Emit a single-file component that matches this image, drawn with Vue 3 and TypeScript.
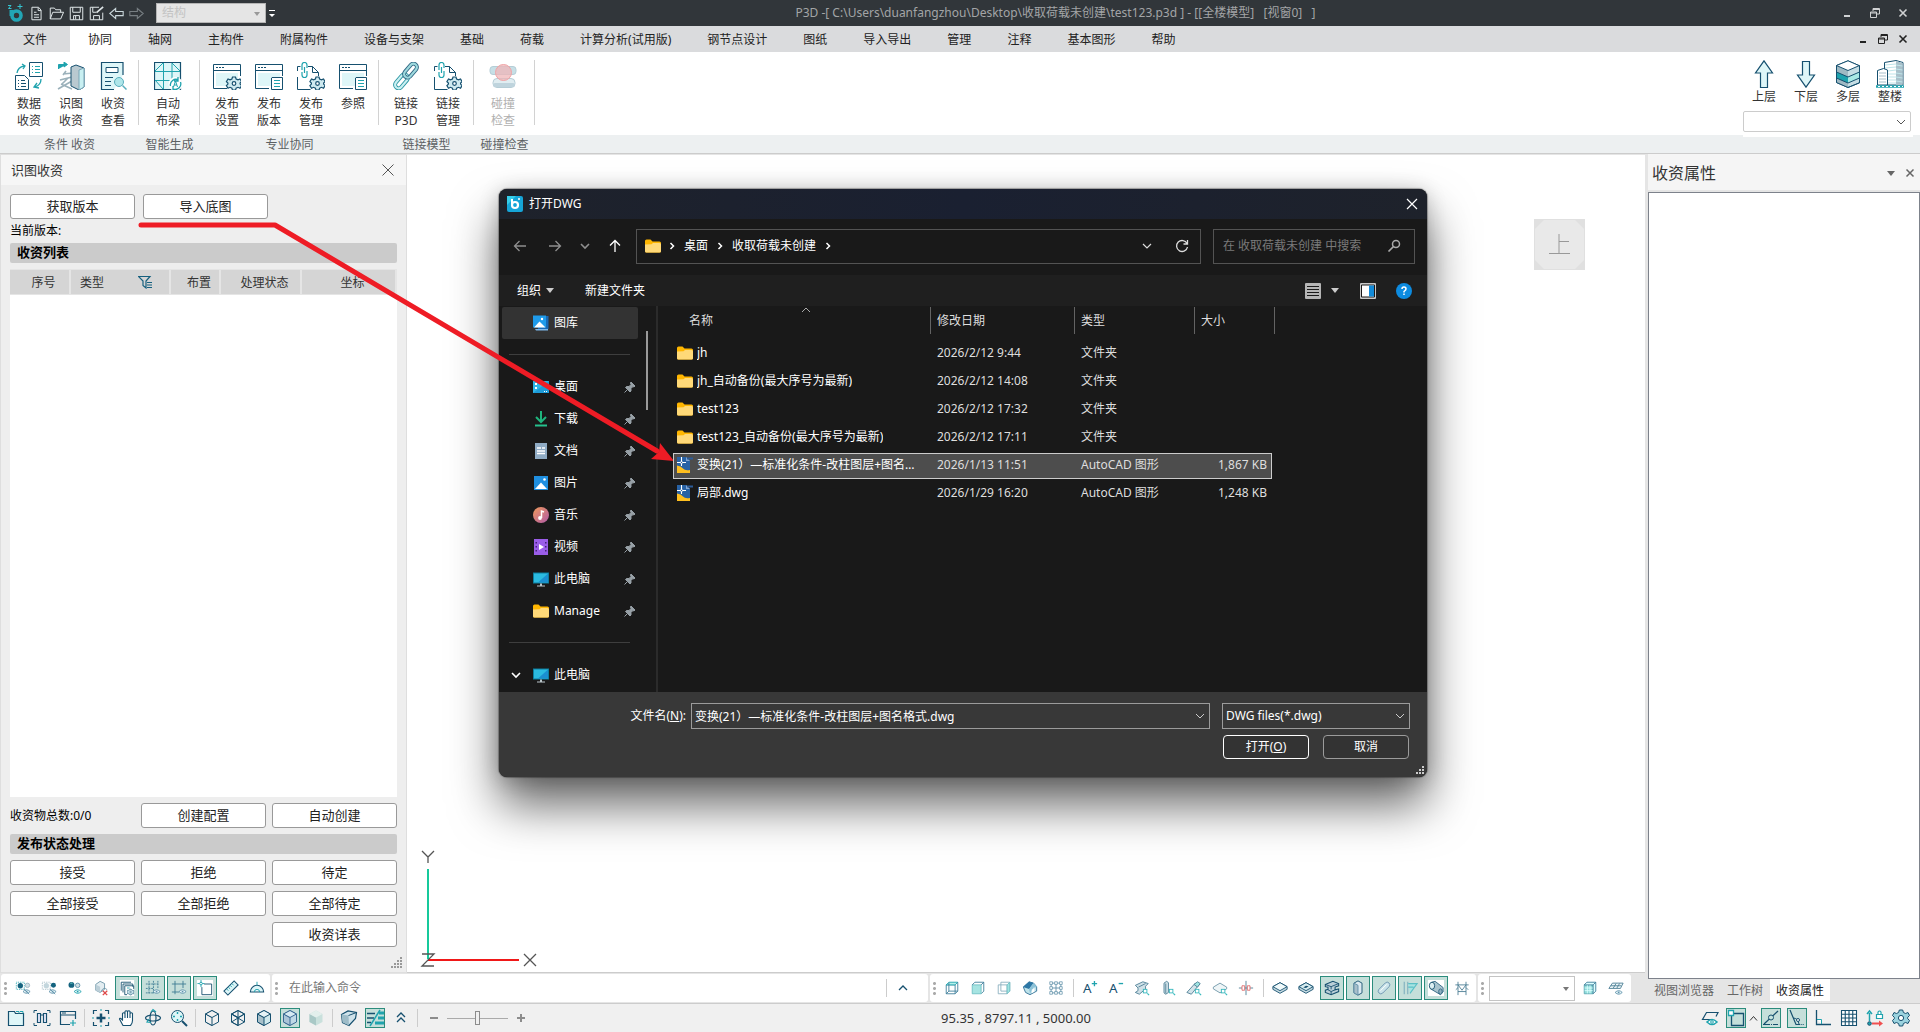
<script setup lang="ts">
import { ref } from 'vue'

type IconMap = Record<string, string>

const N = '#16506f'
const T = '#1fa3ae'
const L = '#def6f8'

const gear = (x: number, y: number, s = 1) =>
  `<g transform="translate(${x} ${y}) scale(${s})"><path d="M-1.5-6.5h3l.6 2 1.9.9 2-.9 1.6 2.6-1.5 1.5v1l1.5 1.5-1.6 2.6-2-.9-1.9.9-.6 2h-3l-.6-2-1.9-.9-2 .9-1.6-2.6 1.5-1.5v-1l-1.5-1.5 1.6-2.6 2 .9 1.9-.9z" fill="#cfeaf0" stroke="${N}" stroke-width="1.2"/><circle r="1.8" fill="#fff" stroke="${N}" stroke-width="1.2"/></g>`
const windowBox = `<path d="M.5 2.5h27v24H.5z" fill="#fff"/><path d="M3 11h22v13H3z" fill="${L}"/><path d="M14 26.500H.5v-24h27V14M.5 8.500h27" fill="none" stroke="${N}"/><path d="M3 5.500h2m1 0h2m1 0h2" stroke="${N}"/>`
const smallDoc = `<path d="M17 15.500h10.500v12h-11V16z" fill="#fff" stroke="${N}"/><path d="M19 18.500h6m-6 3h6m-6 3h6" stroke="${T}"/>`
const linkDoc = `<path d="M.5 15v12.500h13M.5 9V4.500h3M11 4.500h4.500l6 6V14M15.500 4.500v6h6" fill="none" stroke="${N}"/><path d="M5 8V3q0-2.500 2.500-2.500T10 3v3M5 10v3q0 2.500 2.500 2.500T10 13V9M7.500 5v6" fill="none" stroke="${T}" stroke-width="1.2"/>`
const cube = (top: string, left: string, right: string, c = N) =>
  `<path d="M9 1.500l6.500 3.500v8L9 16.500 2.500 13V5z" fill="${right}" stroke="${c}"/><path d="M2.500 5L9 8.500v8L2.500 13z" fill="${left}" stroke="${c}"/><path d="M9 1.500L15.500 5 9 8.500 2.500 5z" fill="${top}" stroke="${c}"/>`
const eye = (x: number, y: number, c = '#5f93ac') =>
  `<path d="M${x - 4} ${y}q4-4 8 0q-4 4-8 0z" fill="#e8f5f8" stroke="${c}"/><circle cx="${x}" cy="${y}" r="1" fill="${c}"/>`
const lens = `<rect x="10.500" y="10.500" width="4" height="4" fill="#fff" stroke="#35b8bd"/><path d="M15 15l2 2" stroke="#35b8bd" stroke-width="1.300"/>`
const folder = `<path d="M0 3q0-1.500 1.500-1.500h4L7.500 3.500h7q1.500 0 1.500 1.500v8q0 1.500-1.500 1.500h-13Q0 14.500 0 13z" fill="#ffb600"/><path d="M0 6.500l6.500-.3L8 5h6.500Q16 5 16 6.500V13q0 1.500-1.500 1.500h-13Q0 14.500 0 13z" fill="#ffd978"/>`
const computer = `<path d="M0 1.500h16v11H0z" fill="#0c7f9f"/><path d="M1 2.500h14v9H1z" fill="#2bbbe0"/><path d="M15 2.500v9H5z" fill="#1b8fd0"/><path d="M7 12.500h2v2H7zM4 14.500h8v1H4z" fill="#b9c4c9"/>`

const big: IconMap = {
  data: `<path d="M14.500.5h13v14h-13z" fill="#fff" stroke="${N}"/><path d="M.5 13.500h9l4 4v10H.5z" fill="#fff" stroke="${N}"/><path d="M17 4.500h1m2 0h5m-8 3h1m2 0h5m-8 3h1m2 0h5" stroke="${T}"/><path d="M3 18.500h1m2 0h4m-7 3h1m2 0h5m-8 3h1m2 0h5" stroke="${N}"/><path d="M2 11q1-6 7-7M7 2l3 2-2 3M26 17q0 6-6 8m2-4l-3 4 5 1" fill="none" stroke="${T}" stroke-width="1.300"/>`,
  identify: `<path d="M1.500 7V2.500h8M7 0l3.500 2.500L7 5z" fill="${T}" stroke="${T}"/><path d="M6 12l10-1M3 18l12-3M9 9l-3 4m5 3l-6 6M15 19L1 27m3-5l11 5" stroke="#9bb1ba" stroke-width="1.600"/><path d="M14 5l5-2 8 3v19l-5 3-8-4z" fill="#b9c9d0" stroke="${N}"/><path d="M22 8l5-2v19l-5 3z" fill="#c9f0f2" stroke="#7ba7b8"/>`,
  inspect: `<path d="M24 13V.5H2.500v27H15" fill="${L}" stroke="${N}" stroke-width="1.200"/><path d="M7 5.500h12v5H7z" fill="#fff" stroke="${N}"/><path d="M6 15.500h8m-8 4h6m-6 4h6" stroke="${N}"/><circle cx="20" cy="20" r="4.500" fill="#aee6ea" stroke="#59aebd"/><path d="M23.500 23.500l4 4" stroke="#59aebd" stroke-width="1.500"/>`,
  beam: `<path d="M.5.5h26v27H.5z" fill="${L}" stroke="${N}" stroke-width="1.200"/><path d="M1 9.500h25M1 18.500h25M9.500 1v26M18 1v26M1 9l8-8M18 1l8 8M1 18l8 9" stroke="${T}" fill="none"/><circle cx="21.500" cy="22" r="7" fill="#fff"/><path d="M16.500 24a5.500 5.500 0 0 1 8-6m2 2a5.500 5.500 0 0 1-7 7M24 15v4h-4m-1 5v4h4" fill="none" stroke="${T}" stroke-width="1.300"/><path d="M19.500 25l2-6 2 6m-3.300-2h2.600" fill="none" stroke="${T}"/>`,
  setup: windowBox + gear(21, 21.500),
  version: windowBox + smallDoc,
  manage: linkDoc + gear(20.500, 21.500),
  link: `<g fill="none" transform="rotate(-50 14 14)"><rect x="-1" y="10.500" width="16" height="7" rx="3.500" stroke="#2a95a2" stroke-width="4"/><rect x="-1" y="10.500" width="16" height="7" rx="3.500" stroke="#c9f0f2" stroke-width="2.200"/><rect x="13" y="10.500" width="16" height="7" rx="3.500" stroke="#2f6683" stroke-width="4"/><rect x="13" y="10.500" width="16" height="7" rx="3.500" stroke="#9ed9dd" stroke-width="2.200"/></g>`,
  collide: `<rect x="1" y="4.500" width="26" height="8" rx="3" fill="#c6dfe6" stroke="#b5cdd6"/><rect x="4" y="16.500" width="22" height="9" rx="4" fill="#e0edf1" stroke="#b5cdd6"/><rect x="4" y="21" width="22" height="4" rx="2" fill="#bfd4dd"/><circle cx="14.500" cy="10.500" r="8" fill="#efb6b8" fill-opacity=".75" stroke="#f0a3a5"/>`,
  up: `<path d="M14 .8L22.500 13h-5v14.500h-7V13h-5z" fill="${L}" stroke="${N}" stroke-width="1.200"/>`,
  down: `<path d="M14 27.200L22.500 15h-5V1.500h-7V15h-5z" fill="${L}" stroke="${N}" stroke-width="1.200"/>`,
  layers: `<path d="M14 .8l11.500 5v17L14 27.500 2.500 22.500v-17z" fill="#c5dde4" stroke="${N}"/><path d="M2.500 5.500L14 10.500v17L2.500 22.500z" fill="#9fb9c3"/><path d="M2.500 12L14 17v6L2.500 18z" fill="${T}"/><path d="M14 17l11.500-5v6L14 23z" fill="#a8e8e4"/><path d="M14 .8l11.500 5L14 10.500 2.500 5.500z" fill="#fff"/><path d="M14 .8l11.500 5v17L14 27.500 2.500 22.500v-17zM2.500 5.500L14 10.500l11.500-5M2.500 12L14 17l11.500-5M2.500 18L14 23l11.500-5" fill="none" stroke="${N}"/>`,
  tower: `<path d="M8.500 9V2.500L20 .5l7 2V25H8.500z" fill="#fff" stroke="${N}"/><path d="M20 1l6.500 2v22H20z" fill="#a9c0ca"/><path d="M9 5l11-1M9 8l11-1M12 11l8-1M12 14h8m-8 3h8m-8 3h8m-8 3h8M20 5l6.500 1M20 9l6.500 1M20 13l6.500 1M20 17l6.500 1M20 21l6.500 1" stroke="#bfe5ea"/><path d="M1.500 25V10.500l6-2 4 1.500v15z" fill="#fff" stroke="${N}"/><path d="M3 13h7m-7 3h7m-7 3h7m-7 3h7" stroke="#a9c0ca"/><path d="M0 26.500h28" stroke="${T}" stroke-width="2.500"/><path d="M2 26.500h25" stroke="#fff" stroke-dasharray="2 2"/>`,
}

const ic: IconMap = {
  hideSel: `<path d="M1.500 2.500h9v8h-9z" fill="none" stroke="${T}" stroke-dasharray="1 1"/><circle cx="6" cy="6.500" r="3" fill="#14637f"/><circle cx="14" cy="6" r="2.500" fill="#cfdfe5" stroke="#9db8c3"/>` + eye(13, 13) + `<path d="M10 10l6 6" stroke="#5f93ac"/>`,
  hideOther: `<path d="M1.500 2.500h9v8h-9z" fill="none" stroke="#9db8c3" stroke-dasharray="1 1"/><circle cx="6" cy="6.500" r="3" fill="#c3d6dd"/><circle cx="14" cy="6" r="2.800" fill="#14637f"/>` + eye(13, 13) + `<path d="M10 10l6 6" stroke="#5f93ac"/>`,
  showAll: `<circle cx="5" cy="5.500" r="3.300" fill="#14637f"/><path d="M4 4q1-1 2 0" stroke="#8ed" fill="none"/><circle cx="12" cy="6" r="2.500" fill="#cfdfe5" stroke="#5f93ac"/>` + eye(12, 13, T),
  cubeDel: `<path d="M8 1.500l5 2.500v6.500L8 14l-5-2.500V5z" fill="#e3edf1" stroke="#6f96a8"/><path d="M8 7.500V14l-5-2.500V5z" fill="#bccfd8"/><path d="M9 13q3-6 7-2" fill="none" stroke="#6f96a8"/><path d="M11 12l5 5m0-5l-5 5" stroke="#e04b4b" stroke-width="1.500"/>`,
  layerEye: `<path d="M1 0h16v18H1z" fill="#fff"/><path d="M2.500 12V2.500h11M4.500 14V4.500h11v3M9 16.500H6.500v-10h10V10" fill="none" stroke="${N}"/><path d="M9 9h3" stroke="${T}"/>` + gear(13, 13.500, 0.5),
  grid: `<path d="M4.500 1v15M9.500 1v15M1 4.500h15M1 9.500h9M14.500 1v8M1 14.500h9" stroke="#3c7b93" stroke-dasharray="2 1" fill="none"/>` + eye(13, 13),
  axis: `<path d="M4.500 1v15M1 13.500h8M1 4.500h16M13.500 1v8" stroke="#3c7b93" fill="none"/>` + eye(13, 13),
  origin: `<path d="M0 0h18v18H0z" fill="#fff"/><path d="M8 4.500h8.500v12h-11V8" fill="none" stroke="${N}"/><path d="M4.500 0v8M.5 4h8" stroke="${T}"/><circle cx="4.500" cy="4" r="1.500" fill="#fff" stroke="${T}"/>`,
  ruler: `<path d="M1 12.500L12.500 1 17 5.500 5.500 17z" fill="${L}" stroke="${N}" stroke-width="1.200"/><path d="M4 10l2 2m0-4l2 2m0-4l2 2m0-4l2 2" stroke="${T}"/>`,
  protractor: `<path d="M1.500 13.500a7.500 7.500 0 0 1 15 0z" fill="${L}" stroke="${N}" stroke-width="1.200"/><path d="M6 13.500a3 3 0 0 1 6 0M9 2v4" fill="none" stroke="${T}"/>`,
  file: `<path d="M1.500 4.500v12h15v-12h-8l-1-2h-6z" fill="${L}" stroke="${N}" stroke-width="1.200"/><path d="M9 2.500h3v2m1-2h3v2" fill="none" stroke="${T}"/>`,
  frames: `<path d="M1 4V1.500h3M14 1.500h3V4M1 14v2.500h3M14 16.500h3V14" fill="none" stroke="${N}"/><path d="M4.500 4.500h3v9h-3zM10.500 4.500h3v9h-3zM8 6h2" fill="#eef" stroke="${N}" stroke-width="1.200"/>`,
  winAdd: `<path d="M11 15.500H1.500v-13h15V10M1.500 6h15" fill="none" stroke="${N}" stroke-width="1.200"/><path d="M3 4h4" stroke="${N}"/><path d="M14 11v6m-3-3h6" stroke="${T}" stroke-width="1.200"/>`,
  center: `<path d="M1.500 5V1.500H5M13 1.500h3.500V5M1.500 13v3.500H5M13 16.500h3.500V13" fill="none" stroke="${N}" stroke-width="1.200"/><path d="M9 4.500v9M4.500 9h9" stroke="${N}" stroke-width="2.500"/><path d="M8 1h2m-2 16h2M1 8v2m16-2v2" stroke="${T}"/>`,
  hand: `<path d="M5 16.500L1.500 10q0-2 3 1V4.500q1-1.500 2.500 0V9 2.500q1-1.500 2.500 0V9 2.500q1.500-1.500 2.500 0V9 4.500q1.500-1.500 2.500 0v7q0 3-2 5z" fill="#fff" stroke="${N}" stroke-width="1.100"/>`,
  orbit: `<ellipse cx="9" cy="9" rx="3" ry="7" fill="none" stroke="${N}" stroke-width="1.200"/><ellipse cx="9" cy="9" rx="7.500" ry="3" fill="none" stroke="${N}" stroke-width="1.200"/><path d="M7 3l2-2.500L12 3M5 10l-2 3 4 .5" fill="none" stroke="${T}" stroke-width="1.200"/>`,
  zoom: `<circle cx="7.500" cy="7.500" r="6" fill="${L}" stroke="${N}"/><path d="M12 12l5 5" stroke="${N}" stroke-width="2"/><path d="M7.500 3v2m0 5v2M3 7.500h2m5 0h2" stroke="${T}" stroke-width="1.400"/>`,
  wire: cube('#f0f0f0', '#f0f0f0', '#f0f0f0'),
  wireX: cube('none', 'none', 'none') + `<path d="M2.500 5l13 8M15.500 5l-13 8M9 1.500v15" stroke="${N}"/>`,
  shaded: cube('#e7f3f6', '#a8c0ca', '#cfe8ec'),
  blue: cube('#d6eaf2', '#a9c5d8', '#bfd9e6', '#3a6a94'),
  soft: cube('#e3efec', '#a9c8c6', '#c9e0dc', 'none'),
  prism: `<path d="M1.500 5.500L8 2l8.500 1.500-1 6-6.500 7-6.500-3z" fill="#cfe2ea" stroke="${N}" stroke-width="1.200"/><path d="M1.500 5.500l7 1 .5 10-6.500-3z" fill="#9ebcc8"/><path d="M8.500 6.500l8-3" stroke="${N}"/>`,
  lines: `<path d="M1 4.500h8M1 9h7M1 13.500h4" stroke="${N}" stroke-width="1.300"/><path d="M13 4h5M12 9h6M9 14h9" stroke="${T}" stroke-width="3"/><path d="M14 1L4 17" stroke="${T}" stroke-width="1.500"/>`,
  chevs: `<path d="M5 8l4-4 4 4M5 13l4-4 4 4" fill="none" stroke="${N}" stroke-width="1.300"/>`,
  minus: `<path d="M5 9h8" stroke="#8c8c8c" stroke-width="2"/>`,
  plus: `<path d="M5 9h8M9 5v8" stroke="#8c8c8c" stroke-width="2"/>`,
  boxTop: `<path d="M2.500 5.500h10v10h-10z" fill="#fff" stroke="#3d7d9a"/><path d="M2.500 5.500l3-3h10l-3 3z" fill="#b5f0ea" stroke="${T}"/><path d="M15.500 2.500v10l-3 3M5.500 3v9.500h10M5.500 12.500l-3 3" fill="none" stroke="#3d7d9a"/>`,
  boxFront: `<path d="M5.500 2.500h10v10l-3 3" fill="#fff" stroke="#3d7d9a"/><path d="M2.500 5.500h10v10h-10z" fill="#a6e4e2" stroke="#6fbfc4"/><path d="M2.500 5.500l3-3M12.500 5.500l3-3" stroke="#3d7d9a"/>`,
  boxSide: `<path d="M2.500 5.500h10v10h-10zM5.500 2.500h10v10h-10z" fill="none" stroke="#8bb0bf"/><path d="M12.500 5.500l3-3v10l-3 3z" fill="#9fe4e1" stroke="#6fbfc4"/>`,
  house: `<path d="M1.500 8L8 2l5 1.500 3.500 4v5L9 16.500 4 14z" fill="#bfe3ea" stroke="#2f6f95"/><path d="M1 8l7-6 5 1.500L8 10z" fill="#2d77a5"/><path d="M8 10l5-6.500L17 8l-4 .5-4 7z" fill="#8cc2d8"/><path d="M11 11l3-2v4l-3 2z" fill="#fff"/>`,
  mesh: `<path d="M3 3.500h12M3 9h12M3 14.500h12M3.500 3v12M9 3v12M14.500 3v12" stroke="#5f8fa8"/><path d="M2 2h3v3H2zM7.500 2h3v3h-3zM13 2h3v3h-3zM2 7.500h3v3H2zM13 7.500h3v3h-3zM2 13h3v3H2zM7.500 13h3v3h-3zM13 13h3v3h-3z" fill="#fff" stroke="#5f8fa8" stroke-width=".8"/>`,
  aPlus: `<text x="1" y="15" font-family="Noto Sans" font-size="15" fill="${N}">A</text><path d="M14 1v6m-3-3h6" stroke="${T}" stroke-width="1.500"/>`,
  aMinus: `<text x="1" y="15" font-family="Noto Sans" font-size="15" fill="${N}">A</text><path d="M12 4h5" stroke="${T}" stroke-width="1.500"/>`,
  beamFind: `<path d="M1.500 6L10 2l6 2-3 3v3l-7 6-4.500-2 3-2V9z" fill="#cfe0e7" stroke="#4d7e95"/><path d="M5 8l8-4" stroke="#4d7e95"/>` + lens,
  colFind: `<path d="M4.500 3.500l3-2 2 1.500v11l-3 2-2-1.500z" fill="#d3e3e9" stroke="#4d7e95"/><path d="M6.500 4v11" stroke="#4d7e95"/>` + lens,
  braceFind: `<path d="M1 14L10 4l5 1L6 16z" fill="#d3e3e9" stroke="#4d7e95"/><path d="M9 5l4-3 3 2-3 4z" fill="#9fe4e1" stroke="#4d7e95"/>` + lens,
  slabFind: `<path d="M1.500 8L9 3.500 16.500 8v2L9 14.500 1.500 10z" fill="#eef5f7" stroke="#6f96a8"/>` + lens,
  cut: `<path d="M9 1v16M1 9h16" stroke="#4d7e95"/><path d="M4.500 6.500h3v5h-3zM10.500 6.500h3v5h-3z" fill="#fff" stroke="#e06b6b"/>`,
  slab: `<path d="M1 7.500L9 3l8 4.500v3L9 15l-8-4.500z" fill="#c4d9e1" stroke="${N}"/><path d="M1 7.500L9 3l8 4.500L9 12z" fill="#f1fafb" stroke="${N}"/>`,
  slabHole: `<path d="M1 7.500L9 3l8 4.500v3L9 15l-8-4.500z" fill="#c4d9e1" stroke="${N}"/><path d="M1 7.500L9 3l8 4.500L9 12z" fill="#d7ecef" stroke="${N}"/><path d="M6 8.500l3-2 3 .5-3 2z" fill="${N}"/>`,
  ibeam: `<path d="M1.500 5L10 1.500 16.500 4v2.500l-4 1.500v3l4-1V13L8 16.500 1.500 14v-2.500l3-1V8l-3-.5z" fill="#b9cfd8" stroke="${N}" stroke-width="1.200"/><path d="M1.500 5L8 7.500 16.500 4M8 7.500v3M8 13v3.500M4.500 11L8 13l4.500-2" fill="none" stroke="${N}"/>`,
  column: `<path d="M4.500 3.500L9 1l4.500 2.500v11L9 17l-4.500-2.500z" fill="#dbeaf0" stroke="${N}"/><path d="M9 6v11l-4.500-2.500v-11z" fill="#a7bfca" stroke="#5f8fa8"/>`,
  tube: `<rect x="1" y="6" width="16" height="6" rx="3" transform="rotate(-45 9 9)" fill="#cbe4ea" stroke="#6f96b0"/><path d="M5 12l7-7" stroke="#fff"/>`,
  flag: `<path d="M2.500 2v14M6.500 2v14" stroke="#6fa3b8"/><path d="M7 4h10L9 15M7 8h6" fill="#a6e4e2" stroke="#5bc0c6" stroke-width="1.300"/>`,
  pipe: `<path d="M0 0h18v18H0z" fill="#fff"/><path d="M4 2.500L8 1.500l9 7v5l-3 3L3 10z" fill="#a9c3ce" stroke="#2f6683"/><ellipse cx="4.500" cy="6.500" rx="3" ry="4" fill="#dceef2" stroke="${N}"/><ellipse cx="14" cy="13" rx="2" ry="3" fill="#8fb0bf" stroke="#2f6683"/>`,
  truss: `<path d="M1.500 5.500h15M4.500 2v15M13.500 2v15M4.500 5.500l4.500 6 4.500-6M2 11l2.500-2.500M16 11l-2.500-2.500M4.500 13h9" fill="none" stroke="#4d7e95"/>`,
  boxGrid: `<path d="M2.500 5.500h10v10h-10z" fill="#8fdcda" stroke="#5fa9b5"/><path d="M2.500 5.500l3-3h10v10l-3 3v-10z" fill="#dff" stroke="#3d7d9a"/><path d="M6 6v9m3-9v9M3 9h9m-9 3h9" stroke="#dff"/><path d="M12.500 5.500l3-3" stroke="#3d7d9a"/>`,
  planeEye: `<path d="M1 9.500l4-6h12l-3 6z" fill="#eef7f9" stroke="#4d7e95"/><path d="M3 6.500h12M9 4l-3 5m7-5l-3 5" stroke="#4d7e95"/>` + eye(12, 14),
  plane: `<path d="M10 10.500H1.500l4-7h11.500l-2 4" fill="none" stroke="${N}" stroke-width="1.200"/><path d="M6 13q5-5 10 0q-5 5-10 0z" fill="#fff" stroke="${T}" stroke-width="1.600"/><circle cx="11" cy="13" r="1.300" fill="#fff" stroke="${T}"/>`,
  snap: `<path d="M6 4.500h10.500v12h-12V6" fill="none" stroke="${N}" stroke-width="1.300"/><path d="M1.500 1.500h5v5h-5z" fill="#fff" stroke="${T}" stroke-width="1.300"/>`,
  near: `<path d="M1 15.500h15" stroke="${N}" stroke-dasharray="7 1 1 1"/><path d="M2 15L16 2" stroke="${N}" stroke-width="1.200"/><circle cx="9" cy="8.500" r="2.500" fill="#c5e3dd" stroke="${N}"/>`,
  angle: `<path d="M2 1l6 14.500h8" fill="none" stroke="${N}" stroke-width="1.200" stroke-dasharray="20 1 1 1"/><path d="M5 9q5 0 6 6" fill="none" stroke="${N}"/><circle cx="10" cy="11" r="1.500" fill="#fff" stroke="${N}"/>`,
  ortho: `<path d="M2.500 1v14.500H17" fill="none" stroke="${N}" stroke-width="1.300"/><path d="M3 10.500h4.500V15" fill="#fff" stroke="${T}"/>`,
  table: `<path d="M1.500 1.500h15v15h-15zM1.500 5.250h15M1.500 9h15M1.500 12.750h15M5.250 1.500v15M9 1.500v15M12.750 1.500v15" fill="#fff" stroke="${N}" stroke-width="1.100"/>`,
  ucs: `<path d="M3.500 12V4M1 5l2.500-3L6 5" fill="none" stroke="${T}" stroke-width="1.500"/><path d="M6 14.500h8" stroke="#f05050" stroke-width="2"/><path d="M13 11.500l4 3-4 3z" fill="#f05050"/><circle cx="3.500" cy="14.500" r="1.800" fill="${T}" stroke="${N}"/><path d="M10.500 5.500h6v4h-6zM12 5V3q1.500-2 3 0v2" fill="#fff" stroke="${T}" stroke-width="1.200"/>`,
  gear: `<g transform="translate(9 9)"><path d="M-1.700-8h3.400l.7 2.500 2.200 1 2.400-1 1.500 3-1.800 1.800v1.400L8.500 2.500 7 5.500l-2.400-1-2.200 1L1.700 8h-3.400l-.7-2.500-2.200-1-2.400 1-1.500-3L-6.700.7V-.7L-8.500-2.500-7-5.500l2.400 1 2.200-1z" fill="#9bd3df" stroke="${N}"/><circle r="2.600" fill="#fff" stroke="${N}"/></g>`,
  qNew: `<path d="M3.500 1.500h8l3 3.500v11.500h-11zM11 2v3.500h3.500M6 7.500h3M6 10.500h6M6 13.500h6" fill="none" stroke="#dfe6e8" stroke-width="1.200"/>`,
  qOpen: `<path d="M1.500 15.500v-13h5l1.500 2h6v3M1.500 15.500l3-8h13l-3.500 8z" fill="none" stroke="#dfe6e8" stroke-width="1.200"/>`,
  qSave: `<path d="M1.500 1.500h15v15h-15zM4.500 1.500v6h9v-6M5.500 16.500v-5h7v5M8 12v4" fill="none" stroke="#dfe6e8" stroke-width="1.200"/>`,
  qSaveAs: `<path d="M12 1.500H1.500v15h15V8M4.500 1.500v6h4M5.500 16.500v-5h7v5" fill="none" stroke="#dfe6e8" stroke-width="1.200"/><path d="M9 8l8-7" stroke="#dfe6e8" stroke-width="2"/>`,
  qUndo: `<path d="M1 9l7-6v3.500h9v5H8V15z" fill="none" stroke="#c9d6da" stroke-width="1.300"/>`,
  qRedo: `<path d="M17 9l-7-6v3.500H1v5h9V15z" fill="none" stroke="#777e82" stroke-width="1.300"/>`,
  logo: `<path d="M4.500 6v6" stroke="#22a5b5" stroke-width="4"/><circle cx="9.500" cy="11.500" r="4.500" fill="none" stroke="#22a5b5" stroke-width="3.600"/><path d="M1 1.500h3L1.500 4.500h3M13 0v5m-2.500-2.500h5" stroke="#35c4d0" fill="none"/>`,
}

const dl: IconMap = {
  folder,
  computer,
  gallery: `<path d="M3 1h12.500v13H5z" fill="#1769b5"/><path d="M0 .5h13v12H0z" fill="#1f9bea"/><path d="M1 12.500l5.500-6 6 6z" fill="#fff"/><circle cx="9" cy="4" r="1.200" fill="#fff"/><path d="M2 14h13v1.500H3z" fill="#7db8ea"/>`,
  desktop: `<path d="M0 2h16v12H0z" fill="#1d9bd8"/><path d="M0 2h16L0 14z" fill="#2fb5e8"/><path d="M2 4h2v2H2zM2 8h2v2H2zM11 12h1v1h-1zM13 12h1v1h-1z" fill="#fff"/>`,
  download: `<path d="M8 0v10M3 6l5 5 5-5" fill="none" stroke="#1fb57d" stroke-width="2"/><path d="M2 14.500h12" stroke="#25c08d" stroke-width="2"/>`,
  doc: `<path d="M2 0h12v16H2z" fill="#8fabc4"/><path d="M4 5h4m1 0h3M4 8h8m-8 2.500h8" stroke="#fff" stroke-width="1.400"/>`,
  picture: `<path d="M1 1h14v14H1z" fill="#1f8fe0"/><path d="M2 14l6-6.500 6 6.500z" fill="#fff"/><circle cx="11.500" cy="4.500" r="1.300" fill="#fff"/>`,
  music: `<defs><linearGradient id="mg" x2="1" y2="1"><stop stop-color="#f09a5a"/><stop offset="1" stop-color="#b05aa8"/></linearGradient></defs><circle cx="8" cy="8" r="8" fill="url(#mg)"/><path d="M8.500 11V4l2.500 1" fill="none" stroke="#fff" stroke-width="1.500"/><circle cx="7" cy="11" r="1.900" fill="#fff"/>`,
  video: `<path d="M1 0h14v16H1z" fill="#9a5de8"/><path d="M2.500 3h1.500v1.500H2.500zM2.500 7h1.500v1.500H2.500zM2.500 11h1.500v1.500H2.500zM12 3h1.500v1.500H12zM12 7h1.500v1.500H12zM12 11h1.500v1.500H12z" fill="#43217a"/><path d="M6 5l5 3-5 3z" fill="#fff"/>`,
  dwg: `<path d="M0 0h9l4 4v12H0z" fill="#2862a5"/><path d="M9 0l4 4H9z" fill="#7fa5d5"/><path d="M0 8.500q4 .5 6 3t7 1.500v3H0z" fill="#ffbf1f"/><path d="M4.500 0v9M0 5.500h9" stroke="#fff" stroke-width="1.100"/><circle cx="4.500" cy="5.500" r="1" fill="#2862a5" stroke="#fff"/><path d="M10 1.500h6" stroke="#2d5c99" stroke-width="2"/>`,
}

const tabs = ['文件', '协同', '轴网', '主构件', '附属构件', '设备与支架', '基础', '荷载', '计算分析(试用版)', '钢节点设计', '图纸', '导入导出', '管理', '注释', '基本图形', '帮助']
const quick = ['qNew', 'qOpen', 'qSave', 'qSaveAs', 'qUndo', 'qRedo']

interface RibbonGroup { label: string; off?: boolean; items: { icon: string; a: string; b: string }[] }
const groups: RibbonGroup[] = [
  { label: '条件 收资', items: [{ icon: 'data', a: '数据', b: '收资' }, { icon: 'identify', a: '识图', b: '收资' }, { icon: 'inspect', a: '收资', b: '查看' }] },
  { label: '智能生成', items: [{ icon: 'beam', a: '自动', b: '布梁' }] },
  { label: '专业协同', items: [{ icon: 'setup', a: '发布', b: '设置' }, { icon: 'version', a: '发布', b: '版本' }, { icon: 'manage', a: '发布', b: '管理' }, { icon: 'version', a: '参照', b: '' }] },
  { label: '链接模型', items: [{ icon: 'link', a: '链接', b: 'P3D' }, { icon: 'manage', a: '链接', b: '管理' }] },
  { label: '碰撞检查', off: true, items: [{ icon: 'collide', a: '碰撞', b: '检查' }] },
]
const floors = [{ icon: 'up', t: '上层' }, { icon: 'down', t: '下层' }, { icon: 'layers', t: '多层' }, { icon: 'tower', t: '整楼' }]

interface Tool { icon: string; on?: boolean }
const parse = (s: string): Tool[] => s.split(' ').map((n) => ({ icon: n.replace('*', ''), on: n.endsWith('*') }))
const leftTools = parse('hideSel hideOther showAll cubeDel layerEye* grid* axis* origin* ruler protractor')
const midTools = parse('boxTop boxFront boxSide house mesh | aPlus aMinus beamFind colFind braceFind slabFind cut | slab slabHole ibeam* column* tube* flag* pipe* truss')
const endTools = parse('boxGrid planeEye')
const statusLeft = parse('file frames winAdd | center hand orbit zoom | wire wireX shaded blue* soft | prism lines* chevs |')
const statusRight = parse('plane snap* ^ near* angle* ortho table ucs gear')

const places = [
  { icon: 'desktop', t: '桌面' }, { icon: 'download', t: '下载' }, { icon: 'doc', t: '文档' }, { icon: 'picture', t: '图片' },
  { icon: 'music', t: '音乐' }, { icon: 'video', t: '视频' }, { icon: 'computer', t: '此电脑' }, { icon: 'folder', t: 'Manage' },
]
const files = [
  { icon: 'folder', n: 'jh', d: '2026/2/12 9:44', k: '文件夹', s: '' },
  { icon: 'folder', n: 'jh_自动备份(最大序号为最新)', d: '2026/2/12 14:08', k: '文件夹', s: '' },
  { icon: 'folder', n: 'test123', d: '2026/2/12 17:32', k: '文件夹', s: '' },
  { icon: 'folder', n: 'test123_自动备份(最大序号为最新)', d: '2026/2/12 17:11', k: '文件夹', s: '' },
  { icon: 'dwg', n: '变换(21）—标准化条件-改柱图层+图名格式.dwg', d: '2026/1/13 11:51', k: 'AutoCAD 图形', s: '1,867 KB' },
  { icon: 'dwg', n: '局部.dwg', d: '2026/1/29 16:20', k: 'AutoCAD 图形', s: '1,248 KB' },
]
const selected = ref(4)
const fileName = ref(files[4].n)
const zoomLevel = ref(50)
const docTitle = 'P3D -[ C:\\Users\\duanfangzhou\\Desktop\\收取荷载未创建\\test123.p3d ] - [[全楼模型]   [视窗0]   ]'

function pick(i: number) {
  selected.value = i
  if (files[i].icon === 'dwg') fileName.value = files[i].n
}
</script>

<template>
  <div class="app">
    <header class="titlebar">
      <svg class="i18 logo" viewBox="0 0 18 18" v-html="ic.logo" />
      <button v-for="q in quick" :key="q" class="quick" :aria-label="q"><svg viewBox="0 0 18 18" v-html="ic[q]" /></button>
      <div class="combo disc">
        <select disabled aria-label="专业"><option>结构</option></select>
        <span class="tri" />
      </div>
      <span class="more"><i /><span class="tri" /></span>
      <h1>{{ docTitle }}</h1>
      <div class="winctl">
        <button aria-label="最小化"><svg viewBox="0 0 12 12"><path d="M3 9h6" stroke="currentColor" stroke-width="2" /></svg></button>
        <button aria-label="还原"><svg viewBox="0 0 12 12"><path d="M4 4V1.500h6.500V7H8M1.500 5h6v5.500h-6zM1.500 6h6M4 2.500h6" fill="none" stroke="currentColor" /></svg></button>
        <button aria-label="关闭"><svg viewBox="0 0 12 12"><path d="M2.500 2.500l7 7m0-7l-7 7" stroke="currentColor" stroke-width="1.600" /></svg></button>
      </div>
    </header>

    <nav class="menu">
      <button v-for="(t, i) in tabs" :key="t" :class="{ first: i === 0, cur: i === 1 }">{{ t }}</button>
      <div class="winctl small">
        <button aria-label="最小化视窗"><svg viewBox="0 0 12 12"><path d="M3 9h6" stroke="currentColor" stroke-width="2" /></svg></button>
        <button aria-label="还原视窗"><svg viewBox="0 0 12 12"><path d="M4 4V1.500h6.500V7H8M1.500 5h6v5.500h-6zM1.500 6h6M4 2.500h6" fill="none" stroke="currentColor" /></svg></button>
        <button aria-label="关闭视窗"><svg viewBox="0 0 12 12"><path d="M2.500 2.500l7 7m0-7l-7 7" stroke="currentColor" stroke-width="1.600" /></svg></button>
      </div>
    </nav>

    <section class="ribbon">
      <div v-for="g in groups" :key="g.label" class="group" :class="{ off: g.off, single: g.items.length === 1 }">
        <div class="tools">
          <button v-for="it in g.items" :key="it.a + it.b" class="bigbtn" :disabled="g.off">
            <svg viewBox="0 0 28 28" v-html="big[it.icon]" /><span>{{ it.a }}</span><span>{{ it.b }}</span>
          </button>
        </div>
        <div class="glabel">{{ g.label }}</div>
      </div>
      <div class="rest" />
      <div class="floors">
        <div class="frow">
          <button v-for="f in floors" :key="f.t"><svg viewBox="0 0 28 28" v-html="big[f.icon]" />{{ f.t }}</button>
        </div>
        <div class="combo floorsel">
          <select aria-label="楼层"><option></option></select>
          <svg class="chev" viewBox="0 0 10 10"><path d="M1 3l4 4 4-4" fill="none" stroke="#555" /></svg>
        </div>
      </div>
    </section>

    <div class="main">
      <div class="work">
        <div class="upper">
          <aside class="panel">
            <div class="ptitle"><span>识图收资</span><button aria-label="关闭面板"><svg viewBox="0 0 12 12"><path d="M.5.5l11 11m0-11l-11 11" stroke="#555" /></svg></button></div>
            <div class="pbody">
              <div class="prow"><button class="pb">获取版本</button><button class="pb">导入底图</button></div>
              <div class="ver">当前版本:</div>
              <h2 class="band">收资列表</h2>
              <div class="list">
                <table>
                  <colgroup><col class="c1"><col class="c2"><col class="c3"><col class="c4"><col></colgroup>
                  <thead><tr>
                    <th>序号</th>
                    <th class="kind"><span>类型<svg viewBox="0 0 14 14"><path d="M.5 1.500h11.500l-4 4.500v7L5 10.500V6zM9 7.500h5M9 10h5M9 12.500h5" fill="none" stroke="#16607f" stroke-width="1.200" /></svg></span></th>
                    <th>布置</th><th>处理状态</th><th>坐标</th>
                  </tr></thead>
                </table>
              </div>
              <div class="pgrid">
                <span class="count">收资物总数:0/0</span><button class="pb">创建配置</button><button class="pb">自动创建</button>
              </div>
              <h2 class="band">发布状态处理</h2>
              <div class="pgrid acts">
                <button class="pb">接受</button><button class="pb">拒绝</button><button class="pb">待定</button>
                <button class="pb">全部接受</button><button class="pb">全部拒绝</button><button class="pb">全部待定</button>
                <button class="pb last">收资详表</button>
              </div>
              <div class="grip"><svg viewBox="0 0 12 12"><path d="M9 1h2M6 4h2m1 0h2M3 7h2m1 0h2m1 0h2M0 10h2m1 0h2m1 0h2m1 0h2" stroke="#999" stroke-width="2" /></svg></div>
            </div>
          </aside>

          <section class="canvas">
            <div class="viewcube"><svg viewBox="0 0 51 51"><path d="M0 0h51v51H0z" fill="#e0e0e0" /><path d="M10 1h31l9 9v31l-9 9H10l-9-9V10z" fill="#e9e9e9" /><path d="M25 15v19M25 22.500h10M15 34.500h21" stroke="#999" /></svg></div>
            <svg class="axes" viewBox="0 0 124 120">
              <path d="M9 21v90" stroke="#16c99b" stroke-width="2" /><path d="M9 112h91" stroke="#f01818" stroke-width="2" />
              <path d="M3 3l6 6 6-6M9 9v6M105 106l12 12m0-12l-12 12M3 106h12L3 118h12" fill="none" stroke="#555" stroke-width="1.300" />
            </svg>

            <div class="dialog" role="dialog" aria-label="打开DWG">
              <div class="dtitle">
                <svg class="i16" viewBox="0 0 16 16"><rect width="16" height="16" rx="2" fill="#16a5d8" /><path d="M0 0h9L0 9z" fill="#35cdea" /><path d="M5 3v6" stroke="#fff" stroke-width="2" /><circle cx="8" cy="9" r="3" fill="none" stroke="#fff" stroke-width="2.200" /><circle cx="12" cy="3" r="1" fill="#fff" /></svg>
                <span>打开DWG</span>
                <button aria-label="关闭"><svg viewBox="0 0 12 12"><path d="M1 1l10 10m0-10L1 11" stroke="#fff" stroke-width="1.200" /></svg></button>
              </div>
              <div class="dnav">
                <button class="nb" aria-label="后退"><svg viewBox="0 0 14 14"><path d="M13 7H1.500M6.500 2l-5 5 5 5" fill="none" stroke="#8f8f8f" stroke-width="1.300" /></svg></button>
                <button class="nb" aria-label="前进"><svg viewBox="0 0 14 14"><path d="M1 7h11.500M7.500 2l5 5-5 5" fill="none" stroke="#8f8f8f" stroke-width="1.300" /></svg></button>
                <button class="nb slim" aria-label="历史"><svg viewBox="0 0 14 14"><path d="M3 5l4 4 4-4" fill="none" stroke="#8f8f8f" stroke-width="1.600" /></svg></button>
                <button class="nb up" aria-label="上移"><svg viewBox="0 0 14 14"><path d="M7 13V1.500M2 6.500l5-5 5 5" fill="none" stroke="#fff" stroke-width="1.300" /></svg></button>
                <div class="addr">
                  <svg class="i16" viewBox="0 0 16 16" v-html="dl.folder" />
                  <svg class="crumb" viewBox="0 0 8 12"><path d="M2.500 3l3 3-3 3" fill="none" stroke="#fff" stroke-width="1.500" /></svg><a href="#">桌面</a>
                  <svg class="crumb" viewBox="0 0 8 12"><path d="M2.500 3l3 3-3 3" fill="none" stroke="#fff" stroke-width="1.500" /></svg><a href="#">收取荷载未创建</a>
                  <svg class="crumb" viewBox="0 0 8 12"><path d="M2.500 3l3 3-3 3" fill="none" stroke="#fff" stroke-width="1.500" /></svg>
                  <button class="ab push" aria-label="展开地址"><svg viewBox="0 0 14 14"><path d="M3 5l4 4 4-4" fill="none" stroke="#ddd" stroke-width="1.200" /></svg></button>
                  <button class="ab" aria-label="刷新"><svg viewBox="0 0 14 14"><path d="M12 4.500A5.500 5.500 0 1 0 12.500 8M12.500 1v4h-4" fill="none" stroke="#ddd" stroke-width="1.300" /></svg></button>
                </div>
                <div class="search">
                  <input type="search" placeholder="在 收取荷载未创建 中搜索" aria-label="搜索">
                  <svg viewBox="0 0 14 14"><circle cx="9" cy="5" r="3.500" fill="none" stroke="#aaa" stroke-width="1.500" /><path d="M6.500 7.500l-5 5" stroke="#aaa" stroke-width="1.700" /></svg>
                </div>
              </div>
              <div class="dbar">
                <button>组织<span class="tri" /></button>
                <button>新建文件夹</button>
                <button class="icon view" aria-label="视图"><svg class="i16" viewBox="0 0 16 16"><rect width="16" height="16" rx="1" fill="#b5b5b5" /><path d="M2 3.500h12M2 6.500h12M2 9.500h12M2 12.500h12" stroke="#191919" /></svg><span class="tri" /></button>
                <button class="icon" aria-label="预览窗格"><svg class="i16" viewBox="0 0 16 16"><rect width="16" height="16" rx="1" fill="#c8c8c8" /><path d="M1.500 2h13v12h-13z" fill="#fff" stroke="#191919" /><path d="M9 2.500h5v11H9z" fill="#118ad8" /></svg></button>
                <button class="icon" aria-label="帮助"><svg class="i16" viewBox="0 0 16 16"><circle cx="8" cy="8" r="8" fill="#0d8be0" /><path d="M6 6q0-2 2-2t2 2q0 1-2 2.500V9.500M8 10.500V12" fill="none" stroke="#fff" stroke-width="1.500" /></svg></button>
              </div>
              <div class="dbody">
                <div class="side">
                  <a href="#" class="place hot"><svg class="i16" viewBox="0 0 16 16" v-html="dl.gallery" /><span>图库</span></a>
                  <hr>
                  <a v-for="p in places" :key="p.t" href="#" class="place">
                    <svg class="i16" viewBox="0 0 16 16" v-html="dl[p.icon]" /><span>{{ p.t }}</span>
                    <svg class="pin" viewBox="0 0 12 12"><path d="M7 1l4 4-1 1-1-.5-2 2 0 2.500-1 1L1.500 6.500l1-1h2.500l2-2L6.500 2zM4 8L.5 11.500" fill="#97a0a6" stroke="#97a0a6" /></svg>
                  </a>
                  <hr>
                  <a href="#" class="place root"><svg class="open" viewBox="0 0 12 12"><path d="M2 4l4 4 4-4" fill="none" stroke="#fff" stroke-width="1.600" /></svg><svg class="i16" viewBox="0 0 16 16" v-html="dl.computer" /><span>此电脑</span></a>
                  <i class="scroll" />
                </div>
                <div class="files">
                  <svg class="sort" viewBox="0 0 10 6"><path d="M1 5l4-4 4 4" fill="none" stroke="#aaa" /></svg>
                  <table>
                    <colgroup><col class="f1"><col class="f2"><col class="f3"><col class="f4"></colgroup>
                    <thead><tr><th class="name">名称</th><th>修改日期</th><th>类型</th><th>大小</th></tr></thead>
                    <tbody>
                      <tr v-for="(f, i) in files" :key="f.n" :class="{ sel: i === selected }" @click="pick(i)">
                        <td class="fname"><div><svg class="i16" viewBox="0 0 16 16" v-html="dl[f.icon]" /><span>{{ f.n }}</span></div></td>
                        <td>{{ f.d }}</td><td>{{ f.k }}</td><td class="size">{{ f.s }}</td>
                      </tr>
                    </tbody>
                  </table>
                </div>
              </div>
              <div class="dfoot">
                <div class="frow1">
                  <label for="fn">文件名(<u>N</u>):</label>
                  <div class="combo dark fn"><input id="fn" v-model="fileName"><svg class="chev" viewBox="0 0 10 10"><path d="M1 3l4 4 4-4" fill="none" stroke="#ccc" /></svg></div>
                  <div class="combo dark ft"><select aria-label="文件类型"><option>DWG files(*.dwg)</option></select><svg class="chev" viewBox="0 0 10 10"><path d="M1 3l4 4 4-4" fill="none" stroke="#ccc" /></svg></div>
                </div>
                <div class="frow2"><button class="main-btn">打开(<u>O</u>)</button><button>取消</button></div>
                <svg class="dgrip" viewBox="0 0 9 9"><path d="M6 1h2M3 4h2m1 0h2M0 7h2m1 0h2m1 0h2" stroke="#ccc" stroke-width="2" /></svg>
              </div>
            </div>
          </section>
        </div>

        <div class="toolrow">
          <div class="bar">
            <i class="handle" />
            <button v-for="t in leftTools" :key="t.icon" class="tb" :class="{ on: t.on }" :aria-label="t.icon"><svg viewBox="0 0 18 18" v-html="ic[t.icon]" /></button>
          </div>
          <div class="bar cmd">
            <i class="handle" /><input placeholder="在此输入命令" aria-label="命令">
            <button aria-label="展开命令"><svg viewBox="0 0 12 12"><path d="M2 8l4-4 4 4" fill="none" stroke="#16506f" stroke-width="1.300" /></svg></button>
          </div>
          <div class="bar midbar">
            <i class="handle" />
            <template v-for="(t, i) in midTools" :key="i">
              <i v-if="t.icon === '|'" class="sep" />
              <button v-else class="tb" :class="{ on: t.on }" :aria-label="t.icon"><svg viewBox="0 0 18 18" v-html="ic[t.icon]" /></button>
            </template>
          </div>
          <div class="bar endbar">
            <i class="handle" />
            <div class="combo dispsel"><select aria-label="显示"><option></option></select><span class="tri" /></div>
            <button v-for="t in endTools" :key="t.icon" class="tb" :aria-label="t.icon"><svg viewBox="0 0 18 18" v-html="ic[t.icon]" /></button>
          </div>
        </div>
      </div>

      <aside class="dock">
        <div class="dockhead"><span>收资属性</span><span class="tri" /><button aria-label="关闭属性"><svg viewBox="0 0 12 12"><path d="M2.500 2.500l7 7m0-7l-7 7" stroke="#666" stroke-width="1.500" /></svg></button></div>
        <div class="dockbox" />
        <div class="docktabs"><button>视图浏览器</button><button>工作树</button><button class="cur">收资属性</button></div>
      </aside>
    </div>

    <footer class="status">
      <template v-for="(t, i) in statusLeft" :key="i">
        <i v-if="t.icon === '|'" class="sep" />
        <button v-else class="tb" :class="{ on: t.on }" :aria-label="t.icon"><svg viewBox="0 0 18 18" v-html="ic[t.icon]" /></button>
      </template>
      <button class="tb" aria-label="缩小"><svg viewBox="0 0 18 18" v-html="ic.minus" /></button>
      <input v-model="zoomLevel" type="range" min="0" max="100" aria-label="缩放">
      <button class="tb" aria-label="放大"><svg viewBox="0 0 18 18" v-html="ic.plus" /></button>
      <span class="sp2" />
      <span class="coord">95.35 , 8797.11 , 5000.00</span>
      <span class="sp3" />
      <template v-for="(t, i) in statusRight" :key="'r' + i">
        <svg v-if="t.icon === '^'" class="caret" viewBox="0 0 9 9"><path d="M1 6.500l3.500-4 3.500 4" fill="none" stroke="#333" /></svg>
        <button v-else class="tb" :class="{ on: t.on }" :aria-label="t.icon"><svg viewBox="0 0 18 18" v-html="ic[t.icon]" /></button>
      </template>
    </footer>

    <svg class="arrow" viewBox="0 0 680 470">
      <path d="M141 225H275L657 451" fill="none" stroke="#ee1c25" stroke-width="5" stroke-linecap="round" stroke-linejoin="round" />
      <path d="M674 461L660 443L659 452L651 459z" fill="#ee1c25" />
    </svg>
  </div>
</template>

<style>
body { margin: 0; background: #e5e5e5; }
</style>

<style scoped>
.app {
  position: relative;
  display: flex;
  flex-direction: column;
  min-height: 100vh;
  font: 12px/16px "Noto Sans", "Noto Sans CJK SC", sans-serif;
  color: #333;
  background: #e5e5e5;
}
.app * { box-sizing: border-box; }
button, input, select { font: inherit; color: inherit; margin: 0; padding: 0; border: 0; background: none; outline: 0; }
svg { display: block; flex: none; }
i { display: block; flex: none; }
.i16 { width: 16px; height: 16px; }
.i18 { width: 18px; height: 18px; }
.tri { display: block; width: 0; height: 0; border: 4px solid transparent; border-top: 5px solid currentColor; border-bottom: 0; flex: none; }
.combo { position: relative; display: flex; }
.combo select, .combo input { appearance: none; width: 100%; height: 100%; }
.combo .tri { position: absolute; right: 5px; top: 8px; pointer-events: none; }
.chev { position: absolute; right: 4px; top: 50%; margin-top: -5px; width: 10px; height: 10px; pointer-events: none; }

.titlebar { display: flex; align-items: center; height: 26px; background: #31363a; color: #a3a5a7; padding: 0 3px 0 8px; }
.logo { margin-left: -1px; margin-right: 1px; }
.quick { width: 20px; height: 20px; display: grid; place-items: center; }
.quick svg { width: 15px; height: 15px; }
.disc { width: 110px; height: 20px; margin-left: 10px; background: #e5e5e5; border: 1px solid #b5b5b5; color: #999; }
.disc select { padding-left: 5px; color: #c3c3c3; opacity: 1; }
.disc .tri { border-width: 3px; border-top-width: 4px; border-bottom-width: 0; }
.more { width: 12px; color: #fff; display: grid; justify-items: center; gap: 3px; }
.more i { width: 6px; height: 1px; background: #fff; }
.more .tri { border-width: 3px; border-bottom-width: 0; }
h1 { flex: 1; margin: 0; font-size: 12px; font-weight: 400; text-align: center; white-space: pre; }
.winctl { display: flex; color: #d0d2d3; margin-left: auto; }
.winctl button { width: 28px; height: 20px; display: grid; place-items: center; }
.winctl svg { width: 12px; height: 12px; }
.winctl.small { color: #222; margin-right: 7px; align-self: center; }
.winctl.small button { width: 20px; }

.menu { display: flex; height: 26px; background: #dadbdd; }
.menu > button { padding: 2px 18px 0; color: #222; white-space: nowrap; }
.menu > .first { width: 70px; }
.menu > .cur { background: #fff; }

.ribbon { display: flex; height: 102px; background: linear-gradient(#fff 83px, #edf0f1 83px); border-bottom: 1px solid #ccc; }
.group { position: relative; display: flex; flex-direction: column; }
.group::after { content: ""; position: absolute; right: 0; top: 8px; height: 65px; width: 1px; background: #d2d2d2; }
.tools { display: flex; height: 83px; padding: 0 5px 0 6px; }
.group:first-child .tools { padding-left: 8px; }
.single .tools { padding: 0 11px 0 8px; }
.bigbtn { width: 42px; display: flex; flex-direction: column; align-items: center; padding-top: 10px; line-height: 17px; }
.bigbtn svg { width: 28px; height: 28px; margin-bottom: 5px; }
.off .bigbtn { color: #b0b0b0; }
.glabel { text-align: center; padding-top: 2px; line-height: 16px; color: #5c6063; white-space: nowrap; }
.rest { flex: 1; }
.floors { width: 170px; height: 85px; margin-right: 7px; background: #fff; }
.frow { display: flex; }
.frow button { width: 42px; display: grid; justify-items: center; padding-top: 8px; line-height: 18px; }
.frow svg { width: 28px; height: 28px; }
.floorsel { width: 168px; height: 21px; margin-top: 5px; border: 1px solid #ccc; border-radius: 2px; }

.main { flex: 1; display: flex; }
.work { flex: 1; min-width: 0; display: flex; flex-direction: column; }
.upper { flex: 1; display: flex; }
.panel { width: 407px; display: flex; flex-direction: column; border: 1px solid #dedede; background: #eee; }
.ptitle { display: flex; justify-content: space-between; align-items: center; height: 30px; padding: 0 12px 1px 10px; background: #f6f6f6; font-size: 13px; }
.ptitle svg { width: 12px; height: 12px; }
.pbody { flex: 1; display: flex; flex-direction: column; padding: 9px 9px 3px; font-size: 13px; }
.prow { display: flex; gap: 8px; }
.pb { width: 125px; height: 25px; padding-bottom: 1px; background: #fff; border: 1px solid #999; border-radius: 3px; color: #222; }
.ver { line-height: 24px; font-size: 12px; color: #000; }
.band { margin: 0; height: 20px; padding-left: 7px; font-size: 13px; line-height: 19px; background: #cbcbcb; border-radius: 2px; color: #000; }
.list { flex: 1; margin: 6px 0; background: #fff; }
.list table { width: 100%; table-layout: fixed; border-spacing: 0; }
.list th { height: 26px; padding: 1px 0 0 8px; font-size: 12px; font-weight: 400; background: #d5d5d5; border: solid #e5e5e5; border-width: 1px 2px 1px 0; }
.list .kind span { display: flex; justify-content: space-between; padding: 0 17px 0 1px; }
.list .kind svg { width: 14px; height: 14px; }
.c1 { width: 61px; } .c2 { width: 100px; } .c3 { width: 50px; } .c4 { width: 81px; }
.pgrid { display: grid; grid-template-columns: repeat(3, 125px); gap: 6px; margin-bottom: 6px; }
.acts { margin: 6px 0 7px; }
.pgrid .last { grid-column: 3; }
.count { font-size: 12px; line-height: 25px; color: #000; }
.grip { align-self: flex-end; margin: 3px -6px 0 0; }
.grip svg { width: 12px; height: 12px; }

.canvas { position: relative; flex: 1; background: #fff; border-bottom: 1px solid #ccc; margin-top: 1px; }
.viewcube { position: absolute; right: 60px; top: 64px; width: 51px; height: 51px; }
.axes { position: absolute; left: 12px; bottom: 4px; width: 124px; height: 120px; }

.dialog {
  position: absolute; left: 92px; top: 34px; width: 928px; display: flex; flex-direction: column; color: #fff;
  background: #191919; border-radius: 8px;
  box-shadow: 0 0 1px 1px rgba(0, 0, 0, .3), 0 2px 20px rgba(0, 0, 0, .2), 0 28px 48px rgba(0, 0, 0, .6);
}
.dtitle { display: flex; align-items: center; height: 30px; padding: 0 9px 0 8px; background: linear-gradient(90deg, #1e222b, #1a2031 50%, #1e222b); border-radius: 8px 8px 0 0; }
.dtitle span { margin-left: 6px; }
.dtitle button { margin-left: auto; }
.dtitle button svg { width: 12px; height: 12px; }
.dnav { display: flex; align-items: center; height: 56px; padding: 0 12px 2px 3px; }
.nb { width: 35px; height: 30px; display: grid; place-items: center; }
.nb svg, .ab svg { width: 14px; height: 14px; }
.nb.slim { width: 26px; }
.nb.up { width: 33px; margin-right: 5px; }
.addr { flex: 1; display: flex; align-items: center; height: 35px; padding: 0 1px 0 8px; border: 1px solid #535353; }
.addr a { color: #fff; text-decoration: none; }
.crumb { width: 8px; height: 12px; margin: 0 8px; }
.addr .i16 + .crumb { margin-left: 7px; }
.ab { width: 35px; height: 30px; display: grid; place-items: center; }
.ab.push { margin-left: auto; }
.search { width: 202px; height: 35px; margin-left: 12px; padding: 0 13px 0 9px; display: flex; align-items: center; border: 1px solid #535353; }
.search input { flex: 1; min-width: 0; appearance: none; }
.search input::placeholder { color: #7a7a7a; opacity: 1; }
.search svg { width: 14px; height: 14px; }
.dbar { display: flex; align-items: center; height: 31px; padding: 0 15px 0 18px; background: #1f1f1f; }
.dbar button { display: flex; align-items: center; gap: 5px; margin-right: 31px; }
.dbar .tri { color: #ccc; }
.dbar .icon { margin: 0 0 0 20px; }
.dbar .view { margin-left: auto; gap: 10px; margin-right: 1px; }
.dbody { display: flex; height: 386px; }
.side { position: relative; width: 159px; padding: 1px 18px 0 3px; border-right: 2px solid #2b2b2b; }
.place { display: flex; align-items: center; height: 32px; padding-left: 31px; color: #fff; text-decoration: none; }
.place span { margin-left: 5px; }
.hot { background: #333; border-radius: 2px; }
.side hr { height: 1px; margin: 15px 8px 16px 7px; border: 0; background: #3e3e3e; }
.pin { width: 12px; height: 12px; margin: 0 2px 0 auto; }
.root { padding-left: 8px; }
.open { width: 12px; height: 12px; margin-right: 11px; }
.scroll { position: absolute; right: 8px; top: 25px; width: 2px; height: 79px; background: #9a9a9a; }
.files { position: relative; flex: 1; padding: 1px 0 0 15px; }
.sort { position: absolute; left: 143px; top: 1px; width: 10px; height: 6px; }
.files table { width: 602px; table-layout: fixed; border-spacing: 0; color: #dedede; }
.f1 { width: 257px; } .f2 { width: 144px; } .f3 { width: 120px; } .f4 { width: 81px; }
.files th { height: 27px; padding: 0 0 0 6px; font-weight: 400; text-align: left; border-left: 1px solid #636363; }
.files th.name { padding-left: 16px; border-left: 0; }
.files th:last-child { border-right: 1px solid #636363; }
.files tbody::before { content: ""; display: block; height: 5px; }
.files td { position: relative; z-index: 1; height: 28px; padding: 0 0 0 7px; white-space: nowrap; }
.files td.fname { padding: 0 8px 0 4px; color: #fff; }
.sel .fname::before { content: ""; position: absolute; z-index: -1; left: 0; top: 2px; width: 597px; height: 24px; background: #4d4d4d; border: 1px solid #ccc; }
.fname div { display: flex; align-items: center; gap: 4px; }
.fname span { overflow: hidden; text-overflow: ellipsis; }
.files td.size { padding-right: 8px; text-align: right; }
.dfoot { position: relative; height: 85px; padding: 11px 17px 0 0; background: #383838; border-radius: 0 0 8px 8px; }
.frow1 { display: flex; justify-content: flex-end; align-items: center; }
.dark { height: 26px; border: 1px solid #9b9b9b; }
.fn { width: 519px; margin: 0 12px 0 5px; }
.ft { width: 188px; }
.dark input, .dark select { padding: 0 20px 0 3px; }
.frow2 { display: flex; justify-content: flex-end; gap: 14px; padding: 6px 1px 0 0; }
.frow2 button { width: 86px; height: 24px; border: 1px solid #9b9b9b; border-radius: 4px; background: #333; }
.frow2 .main-btn { border-color: #fff; }
.dgrip { position: absolute; right: 2px; bottom: 2px; width: 9px; height: 9px; }

.toolrow { display: flex; gap: 2px; height: 30px; padding: 1px 14px 1px 1px; }
.bar { display: flex; align-items: center; background: #fff; border-radius: 3px; }
.handle { width: 9px; height: 15px; background: radial-gradient(circle, #aaa 1px, transparent 2px) center / 9px 5px; }
.tb { width: 24px; height: 24px; margin: 0 1px; display: grid; place-items: center; flex: none; }
.tb svg { width: 18px; height: 18px; overflow: visible; }
.bar .tb svg { width: 16px; height: 16px; }
.tb.on { background: #c5dfda; border: 1px solid #2b8c7c; }
.sep { width: 1px; height: 18px; margin: 0 3px; background: #ccc; }
.bar .sep { margin-left: 4px; }
.cmd { flex: 1; }
.cmd input { flex: 1; padding-left: 8px; }
.cmd input::placeholder { color: #777; opacity: 1; }
.cmd button { width: 42px; height: 18px; padding-left: 10px; border-left: 1px solid #ccc; }
.cmd button svg { width: 12px; height: 12px; }
.midbar { padding-right: 1px; }
.endbar { padding-right: 2px; }
.dispsel { width: 86px; height: 25px; margin: 0 2px; border: 1px solid #c4c4c4; color: #777; }
.dispsel .tri { top: 10px; border-width: 3px; border-top-width: 4px; border-bottom-width: 0; }

.dock { width: 275px; display: flex; flex-direction: column; padding-left: 3px; }
.dockhead { display: flex; align-items: center; height: 36px; padding: 2px 4px 0; background: #f5f5f5; font-size: 16px; }
.dockhead .tri { margin: 0 9px 0 auto; color: #666; }
.dockhead svg { width: 12px; height: 12px; }
.dockbox { flex: 1; margin-top: 2px; background: #fff; border: 1px solid #7d828b; }
.docktabs { display: flex; height: 24px; }
.docktabs button { height: 22px; padding: 1px 6px 0; color: #666; }
.docktabs button:nth-child(2) { padding: 1px 7px 0; }
.docktabs .cur { background: #fff; color: #222; }

.status { display: flex; align-items: center; height: 29px; padding: 0 6px 0 3px; background: #f0f0f0; border-top: 1px solid #ccc; }
.status .tb.on { width: 20px; height: 20px; margin: 0 3px; }
.status input { width: 61px; height: 18px; appearance: none; background: linear-gradient(#aaa, #aaa) center / 100% 1px no-repeat; }
.status input::-webkit-slider-thumb { appearance: none; width: 5px; height: 14px; background: #f0f0f0; border: 1px solid #8c8c8c; }
.sp2 { flex: 2; } .sp3 { flex: 3; }
.coord { padding-left: 3px; font-size: 13px; white-space: nowrap; }
.caret { width: 9px; height: 9px; }

.arrow { position: absolute; left: 0; top: 0; width: 680px; height: 470px; pointer-events: none; }
</style>
